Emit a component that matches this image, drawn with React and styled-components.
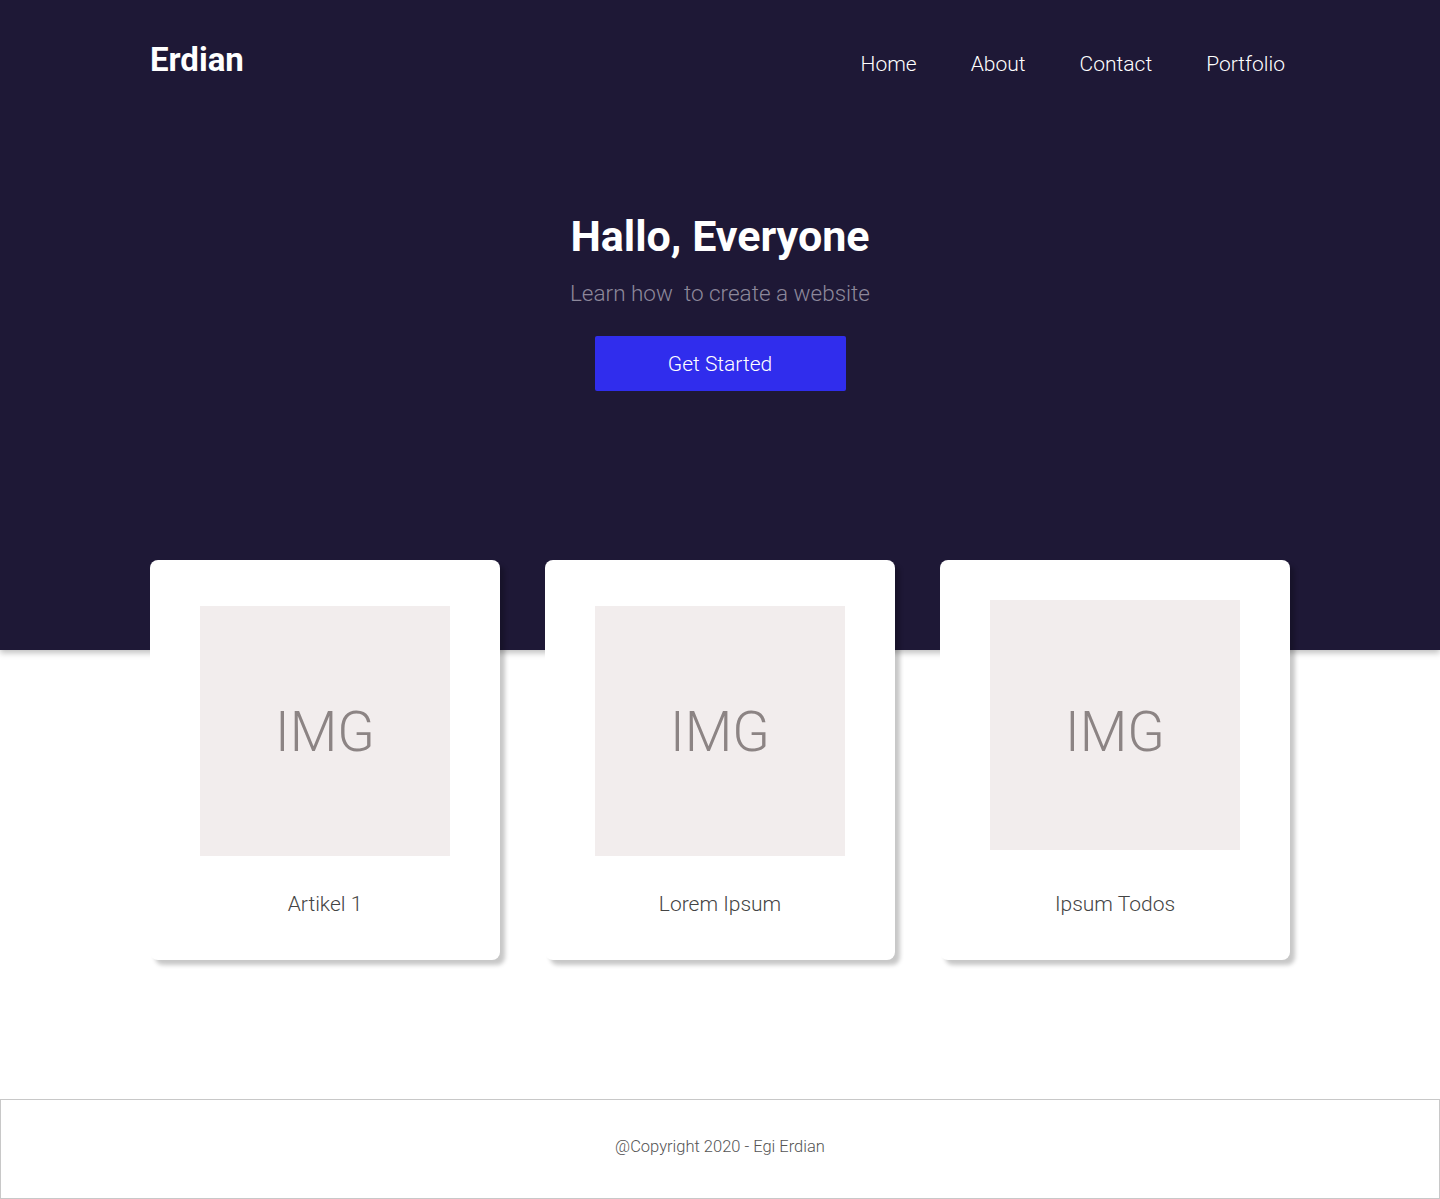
import styled, { createGlobalStyle } from 'styled-components';

const GlobalStyle = createGlobalStyle`
  body {
    margin: 0;
    background: #ffffff;
    font-family: Roboto, 'Liberation Sans', sans-serif;
  }
`;

const Header = styled.header`
  background: #1e1836;
  height: 650px;
  box-shadow: 0 3px 6px rgba(0, 0, 0, 0.25);
`;

const NavBar = styled.nav`
  display: flex;
  justify-content: space-between;
  align-items: center;
  height: 122px;
  padding: 0 155px 0 150px;
`;

const Logo = styled.h1`
  margin: 0 0 4px;
  color: #ffffff;
  font-size: 33px;
  font-weight: 700;
`;

const NavList = styled.ul`
  display: flex;
  gap: 54px;
  list-style: none;
  margin: 6px 0 0;
  padding: 0;
`;

const NavItem = styled.li`
  color: #ffffff;
  font-size: 21px;
  font-weight: 300;
`;

const Hero = styled.div`
  display: flex;
  flex-direction: column;
  align-items: center;
  padding-top: 89px;
`;

const Title = styled.h2`
  margin: 0;
  color: #ffffff;
  font-size: 43px;
  font-weight: 700;
`;

const Subtitle = styled.p`
  margin: 19px 0 0;
  color: #8d889b;
  font-size: 22.5px;
  font-weight: 300;
  white-space: pre;
`;

const Button = styled.button`
  margin-top: 30px;
  width: 251px;
  height: 55px;
  border: none;
  border-radius: 2px;
  background: #302ded;
  color: #ffffff;
  font-family: inherit;
  font-size: 21px;
  font-weight: 300;
`;

const CardRow = styled.section`
  display: flex;
  gap: 45px;
  padding-left: 150px;
  margin-top: -90px;
  position: relative;
`;

const Card = styled.article`
  width: 350px;
  height: 400px;
  background: #ffffff;
  border-radius: 8px;
  box-shadow: 5px 5px 4px rgba(0, 0, 0, 0.22);
  display: flex;
  flex-direction: column;
  align-items: center;
`;

const ImageBox = styled.div`
  margin-top: ${(p) => p.$top}px;
  width: 250px;
  height: 250px;
  background: #f2eded;
  display: flex;
  align-items: center;
  justify-content: center;
  color: #8c8484;
  font-size: 55px;
  font-weight: 300;
  padding-top: ${(p) => 2 * (46 - p.$top) + 2}px;
  box-sizing: border-box;
`;

const Caption = styled.p`
  margin: ${(p) => 36 + (46 - p.$top)}px 0 0;
  color: #444444;
  font-size: 21px;
  font-weight: 300;
`;

const Footer = styled.footer`
  margin-top: 139px;
  height: 100px;
  border: 1px solid #c8c8c8;
  box-sizing: border-box;
  display: flex;
  align-items: center;
  justify-content: center;
  padding-bottom: 6px;
  color: #555555;
  font-size: 16.5px;
  font-weight: 300;
`;

const cards = [
  { title: 'Artikel 1', top: 46 },
  { title: 'Lorem Ipsum', top: 46 },
  { title: 'Ipsum Todos', top: 40 },
];

export default function App() {
  return (
    <>
      <GlobalStyle />
      <Header>
        <NavBar>
          <Logo>Erdian</Logo>
          <NavList>
            <NavItem>Home</NavItem>
            <NavItem>About</NavItem>
            <NavItem>Contact</NavItem>
            <NavItem>Portfolio</NavItem>
          </NavList>
        </NavBar>
        <Hero>
          <Title>Hallo, Everyone</Title>
          <Subtitle>Learn how  to create a website</Subtitle>
          <Button>Get Started</Button>
        </Hero>
      </Header>
      <CardRow>
        {cards.map((c) => (
          <Card key={c.title}>
            <ImageBox $top={c.top}>IMG</ImageBox>
            <Caption $top={c.top}>{c.title}</Caption>
          </Card>
        ))}
      </CardRow>
      <Footer>@Copyright 2020 - Egi Erdian</Footer>
    </>
  );
}
